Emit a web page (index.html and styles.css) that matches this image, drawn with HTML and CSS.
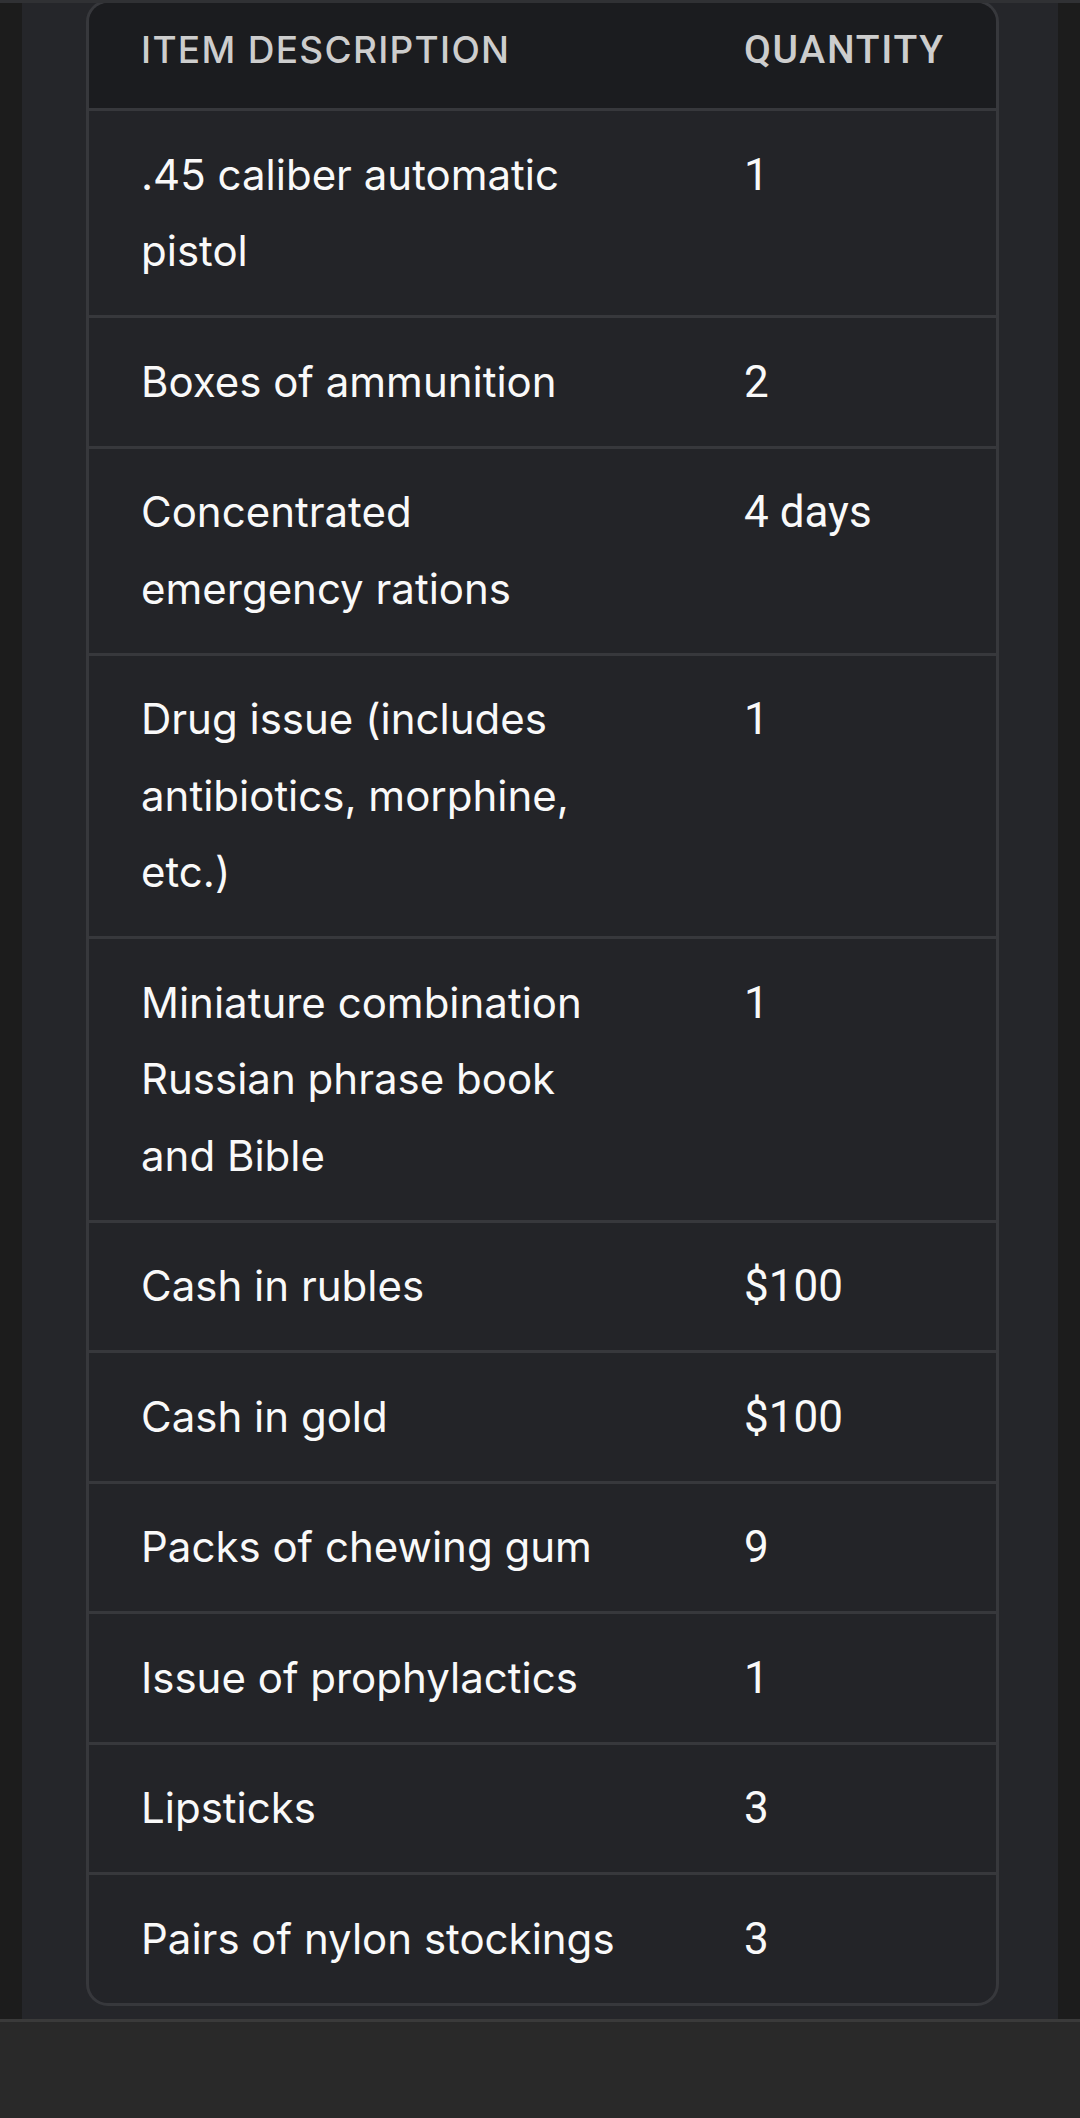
FILE: index.html
```html
<!DOCTYPE html>
<html lang="en">
<head>
<meta charset="utf-8">
<title>Survival kit inventory</title>
<link rel="stylesheet" href="styles.css">
</head>
<body>
<div class="topline"></div>
<main class="panel">
  <div class="table-wrap">
    <table class="inventory">
      <colgroup>
        <col class="col-desc">
        <col class="col-qty">
      </colgroup>
      <thead>
        <tr>
          <th class="desc">ITEM DESCRIPTION</th>
          <th class="qty">QUANTITY</th>
        </tr>
      </thead>
      <tbody>
        <tr><td class="desc">.45 caliber automatic pistol</td><td class="qty">1</td></tr>
        <tr><td class="desc">Boxes of ammunition</td><td class="qty">2</td></tr>
        <tr><td class="desc">Concentrated emergency rations</td><td class="qty">4 days</td></tr>
        <tr><td class="desc">Drug issue (includes antibiotics, morphine, etc.)</td><td class="qty">1</td></tr>
        <tr><td class="desc">Miniature combination Russian phrase book and Bible</td><td class="qty">1</td></tr>
        <tr><td class="desc">Cash in rubles</td><td class="qty">$100</td></tr>
        <tr><td class="desc">Cash in gold</td><td class="qty">$100</td></tr>
        <tr><td class="desc">Packs of chewing gum</td><td class="qty">9</td></tr>
        <tr><td class="desc">Issue of prophylactics</td><td class="qty">1</td></tr>
        <tr><td class="desc">Lipsticks</td><td class="qty">3</td></tr>
        <tr><td class="desc">Pairs of nylon stockings</td><td class="qty">3</td></tr>
      </tbody>
    </table>
  </div>
</main>
<footer class="bottom-bar"></footer>
</body>
</html>
```

FILE: styles.css
```css
html, body {
  margin: 0;
  padding: 0;
}

body {
  background: #1c1c1c;
  min-height: 100vh;
  display: flex;
  flex-direction: column;
  font-family: "Inter", "Open Sans", sans-serif;
}

.topline {
  position: fixed;
  top: 0;
  left: 0;
  right: 0;
  height: 3px;
  background: #303134;
  z-index: 5;
}

.panel {
  margin-left: 22px;
  width: 1036px;
  box-sizing: border-box;
  padding: 0 59px 13px 64px;
  background: #25262a;
}

.table-wrap {
  border: 3px solid #37383c;
  border-radius: 22px;
  overflow: hidden;
  background: #232428;
}

.inventory {
  width: 100%;
  table-layout: fixed;
  border-collapse: separate;
  border-spacing: 0;
}

.col-desc { width: 603px; }
.col-qty { width: 304px; }

.inventory th {
  background: #1b1c1f;
  color: #cdcdcd;
  font-weight: 500;
  text-align: left;
  vertical-align: top;
  line-height: 44px;
  padding-top: 25px;
  padding-bottom: 36px;
  border-bottom: 3px solid #37383c;
  white-space: nowrap;
}

.inventory th.desc {
  font-family: "Inter", sans-serif;
  font-size: 37px;
  letter-spacing: 1.3px;
  padding-left: 52px;
  padding-right: 71px;
}

.inventory th.qty {
  font-family: "Roboto", sans-serif;
  font-size: 39px;
  letter-spacing: 1.7px;
  padding-left: 52px;
  padding-right: 20px;
}

.inventory td {
  color: #f9f9f9;
  vertical-align: top;
  line-height: 76.5px;
  padding-top: 25.5px;
  padding-bottom: 25.5px;
  border-bottom: 3px solid #37383c;
}

.inventory tbody tr:last-child td {
  border-bottom: none;
}

.inventory td.desc {
  font-family: "Inter", sans-serif;
  font-size: 42px;
  padding-left: 52px;
  padding-right: 71px;
}

.inventory td.qty {
  font-family: "Roboto", sans-serif;
  font-size: 44px;
  padding-left: 52px;
  padding-right: 20px;
}

.bottom-bar {
  flex: 1;
  background: #292929;
  border-top: 3px solid #3a3a3a;
}
```
